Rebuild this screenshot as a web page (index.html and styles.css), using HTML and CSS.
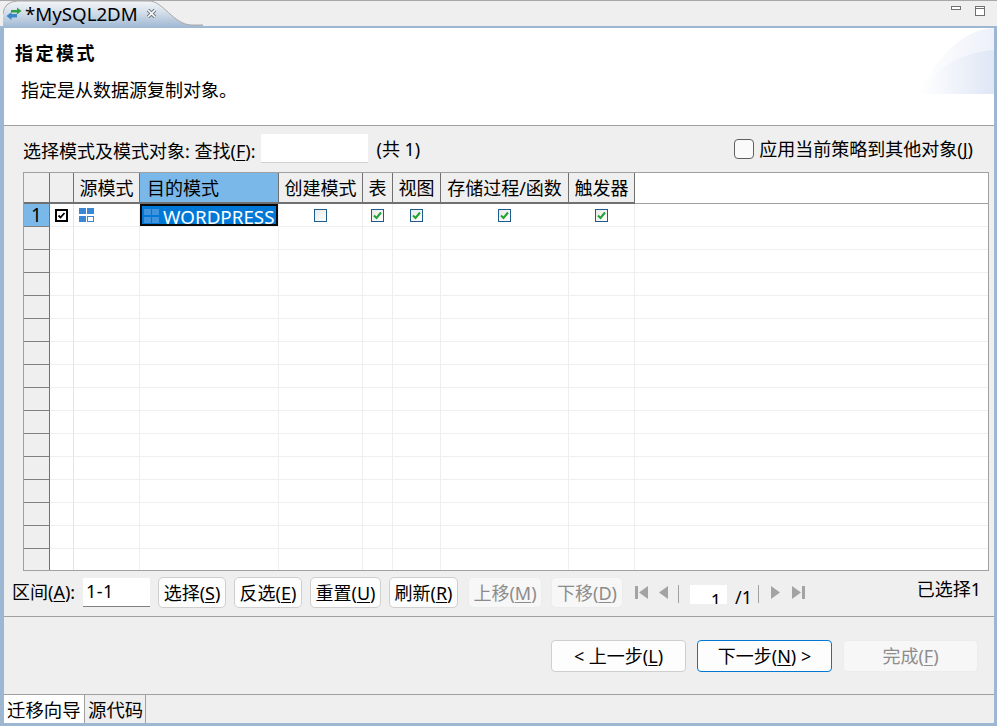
FILE: index.html
```html
<!DOCTYPE html>
<html lang="zh-CN">
<head>
<meta charset="utf-8">
<title>MySQL2DM</title>
<link rel="stylesheet" href="styles.css">
</head>
<body>
<div class="window">
  <div class="tabbar">
    <svg class="tabshape" width="200" height="28" viewBox="0 0 200 28">
      <defs><linearGradient id="tg" x1="0" y1="0" x2="0" y2="1"><stop offset="0" stop-color="#f3f5f8"/><stop offset="0.4" stop-color="#d6e0eb"/><stop offset="1" stop-color="#9db6d2"/></linearGradient></defs>
      <path d="M0 28V14Q1 2 14 1H146C160 1 170 24 188 25H200V28Z" fill="url(#tg)"/>
      <path d="M0 14Q1 2 14 1H146C160 1 170 24 188 25H200" fill="none" stroke="#a8a8a8"/>
    </svg>
    <div class="tab">
      <svg class="tabicon" width="16" height="14" viewBox="0 0 16 14">
        <path d="M5 3h6V0.500L15.500 4 11 7.500V5.500H5Z" fill="#2ea044"/>
        <path d="M11 7H5.500V5L0.500 9 5.500 13V10.500H11Z" fill="#3c86c8"/>
      </svg>
      <span class="tabtitle">*MySQL2DM</span>
      <svg class="tabclose" width="11" height="11" viewBox="0 0 11 11">
        <path d="M2 2L9 9M9 2L2 9" stroke="#6f7a85" stroke-width="3.600"/>
        <path d="M2 2L9 9M9 2L2 9" stroke="#fff" stroke-width="1.600"/>
      </svg>
    </div>
    <div class="winbtns">
      <svg width="11" height="6" viewBox="0 0 11 6"><rect x="0.500" y="0.500" width="9" height="3" fill="#fff" stroke="#707070"/></svg>
      <svg width="11" height="11" viewBox="0 0 11 11"><rect x="0.500" y="0.500" width="9" height="9" fill="#fff" stroke="#707070"/><path d="M0 2.500H10" stroke="#707070"/></svg>
    </div>
  </div>

  <div class="content">
    <header class="banner">
      <svg class="bannerart" width="76" height="66" viewBox="0 0 76 66">
        <defs>
          <linearGradient id="b1" x1="0" y1="0" x2="1" y2="0"><stop offset="0" stop-color="#fff"/><stop offset="1" stop-color="#dfe6f5"/></linearGradient>
          <linearGradient id="b2" x1="0" y1="0" x2="1" y2="0"><stop offset="0" stop-color="#fff"/><stop offset="1" stop-color="#edf1f9"/></linearGradient>
        </defs>
        <path d="M0 66C14 40 38 2 76 0V66Z" fill="url(#b2)"/>
        <path d="M2 66C14 44 40 24 76 22V66Z" fill="url(#b1)"/>
      </svg>
      <h1 class="bannertitle">指定模式</h1>
      <p class="bannerdesc">指定是从数据源复制对象。</p>
    </header>

    <div class="searchrow">
      <span>选择模式及模式对象: 查找(<u>F</u>):</span>
      <span class="searchinput"></span>
      <span class="count">(共 1)</span>
      <label class="applyall"><span class="bigcheck"></span><span>应用当前策略到其他对象(<u>J</u>)</span></label>
    </div>

    <div class="gridwrap">
      <table class="grid">
        <colgroup>
          <col class="c-num"><col class="c-chk"><col class="c-src"><col class="c-dst"><col class="c-create"><col class="c-tbl"><col class="c-view"><col class="c-proc"><col class="c-trg"><col>
        </colgroup>
        <thead>
          <tr>
            <th></th><th></th><th>源模式</th><th class="active">目的模式</th><th>创建模式</th><th>表</th><th>视图</th><th>存储过程/函数</th><th>触发器</th><th class="filler"></th>
          </tr>
        </thead>
        <tbody>
          <tr class="first">
            <td class="num selnum">1</td>
            <td class="mid"><svg class="ico" width="13" height="13" viewBox="0 0 13 13"><rect x="1" y="1" width="11" height="11" fill="#fff" stroke="#000" stroke-width="2"/><path d="M3.500 6.500L5.500 8.500L9.500 4" fill="none" stroke="#000" stroke-width="1.800"/></svg></td>
            <td class="iconcell"><svg class="ico" width="16" height="15" viewBox="0 0 16 15"><path d="M0 0H7V6H0ZM8 0H15V6H8ZM0 8H7V14H0Z" fill="#3a87d6"/><rect x="8.500" y="8.500" width="6" height="5" fill="#fff" stroke="#3a87d6"/></svg></td>
            <td class="selcell"><svg class="ico" width="16" height="15" viewBox="0 0 16 15"><path d="M0 0H7V6H0ZM8 0H15V6H8ZM0 8H7V14H0ZM8 8H15V14H8Z" fill="#3f93dd"/></svg><span>WORDPRESS</span></td>
            <td class="mid"><span class="box"></span></td>
            <td class="mid"><span class="box"><svg width="11" height="11" viewBox="0 0 11 11"><path d="M2 5.500L4.500 8L9 2.500" fill="none" stroke="#22a12e" stroke-width="2"/></svg></span></td>
            <td class="mid"><span class="box"><svg width="11" height="11" viewBox="0 0 11 11"><path d="M2 5.500L4.500 8L9 2.500" fill="none" stroke="#22a12e" stroke-width="2"/></svg></span></td>
            <td class="mid"><span class="box"><svg width="11" height="11" viewBox="0 0 11 11"><path d="M2 5.500L4.500 8L9 2.500" fill="none" stroke="#22a12e" stroke-width="2"/></svg></span></td>
            <td class="mid"><span class="box"><svg width="11" height="11" viewBox="0 0 11 11"><path d="M2 5.500L4.500 8L9 2.500" fill="none" stroke="#22a12e" stroke-width="2"/></svg></span></td>
            <td class="filler"></td>
          </tr>
          <tr><td class="num"></td><td></td><td></td><td></td><td></td><td></td><td></td><td></td><td></td><td class="filler"></td></tr>
          <tr><td class="num"></td><td></td><td></td><td></td><td></td><td></td><td></td><td></td><td></td><td class="filler"></td></tr>
          <tr><td class="num"></td><td></td><td></td><td></td><td></td><td></td><td></td><td></td><td></td><td class="filler"></td></tr>
          <tr><td class="num"></td><td></td><td></td><td></td><td></td><td></td><td></td><td></td><td></td><td class="filler"></td></tr>
          <tr><td class="num"></td><td></td><td></td><td></td><td></td><td></td><td></td><td></td><td></td><td class="filler"></td></tr>
          <tr><td class="num"></td><td></td><td></td><td></td><td></td><td></td><td></td><td></td><td></td><td class="filler"></td></tr>
          <tr><td class="num"></td><td></td><td></td><td></td><td></td><td></td><td></td><td></td><td></td><td class="filler"></td></tr>
          <tr><td class="num"></td><td></td><td></td><td></td><td></td><td></td><td></td><td></td><td></td><td class="filler"></td></tr>
          <tr><td class="num"></td><td></td><td></td><td></td><td></td><td></td><td></td><td></td><td></td><td class="filler"></td></tr>
          <tr><td class="num"></td><td></td><td></td><td></td><td></td><td></td><td></td><td></td><td></td><td class="filler"></td></tr>
          <tr><td class="num"></td><td></td><td></td><td></td><td></td><td></td><td></td><td></td><td></td><td class="filler"></td></tr>
          <tr><td class="num"></td><td></td><td></td><td></td><td></td><td></td><td></td><td></td><td></td><td class="filler"></td></tr>
          <tr><td class="num"></td><td></td><td></td><td></td><td></td><td></td><td></td><td></td><td></td><td class="filler"></td></tr>
          <tr><td class="num"></td><td></td><td></td><td></td><td></td><td></td><td></td><td></td><td></td><td class="filler"></td></tr>
          <tr><td class="num"></td><td></td><td></td><td></td><td></td><td></td><td></td><td></td><td></td><td class="filler"></td></tr>
          <tr><td class="num"></td><td></td><td></td><td></td><td></td><td></td><td></td><td></td><td></td><td class="filler"></td></tr>
        </tbody>
      </table>
    </div>

    <div class="toolbar">
      <span class="rangelabel">区间(<u>A</u>):</span>
      <span class="rangeinput">1-1</span>
      <button class="btn b-sel">选择(<u>S</u>)</button>
      <button class="btn b-inv">反选(<u>E</u>)</button>
      <button class="btn b-rst">重置(<u>U</u>)</button>
      <button class="btn b-ref">刷新(<u>R</u>)</button>
      <button class="btn b-up" disabled>上移(<u>M</u>)</button>
      <button class="btn b-dn" disabled>下移(<u>D</u>)</button>
      <div class="pager">
        <svg width="13" height="13" viewBox="0 0 13 13"><path d="M0 0H3V13H0ZM13 0V13L4 6.500Z" fill="#a3a3a3"/></svg>
        <svg class="pg-prev" width="10" height="13" viewBox="0 0 10 13"><path d="M10 0V13L1 6.500Z" fill="#a3a3a3"/></svg>
        <span class="sep"></span>
        <span class="pageinput">1</span>
        <span class="pagetotal">/1</span>
        <span class="sep sep2"></span>
        <svg class="pg-next" width="10" height="13" viewBox="0 0 10 13"><path d="M0 0V13L9 6.500Z" fill="#a3a3a3"/></svg>
        <svg class="pg-last" width="13" height="13" viewBox="0 0 13 13"><path d="M0 0V13L9 6.500ZM10 0H13V13H10Z" fill="#a3a3a3"/></svg>
      </div>
      <span class="selected">已选择1</span>
    </div>

    <div class="wizardnav">
      <button class="navbtn">&lt; 上一步(<u>L</u>)</button>
      <button class="navbtn primary">下一步(<u>N</u>) &gt;</button>
      <button class="navbtn" disabled>完成(<u>F</u>)</button>
    </div>

    <div class="bottomtabs">
      <span class="btab on">迁移向导</span>
      <span class="btab">源代码</span>
    </div>
  </div>
</div>
</body>
</html>
```

FILE: styles.css
```css
* { box-sizing: border-box; }
html, body { margin: 0; padding: 0; }
body {
  width: 997px;
  height: 726px;
  overflow: hidden;
  background: #efefef;
  color: #000;
  font-family: "Noto Sans", "Noto Sans CJK SC", sans-serif;
  font-size: 18px;
  line-height: 22px;
}
u { text-underline-offset: 2px; text-decoration-thickness: 1px; }
.window { width: 997px; height: 726px; display: flex; flex-direction: column; }

/* top tab strip */
.tabbar {
  position: relative;
  height: 26px;
  flex: none;
  display: flex;
  align-items: center;
  justify-content: space-between;
  border-top: 1px solid #a8a8a8;
}
.tabshape { position: absolute; left: 3px; top: -1px; }
.tab { position: relative; display: flex; align-items: center; padding-left: 6px; height: 25px; }
.tabtitle { margin-left: 3px; font-size: 18.700px; width: 121px; }
.tabicon { display: block; }
.tabclose { display: block; }
.winbtns { display: flex; align-items: flex-start; gap: 13px; padding-right: 11px; height: 25px; padding-top: 5px; }
.winbtns svg { display: block; }

/* framed content */
.content {
  flex: 1;
  display: flex;
  flex-direction: column;
  min-height: 0;
  border: solid #9db6d2;
  border-width: 2px 3px 3px 4px;
}
.banner {
  position: relative;
  height: 98px;
  flex: none;
  background: #fff;
  border-bottom: 1px solid #a0a0a0;
  padding: 14px 0 0 11px;
}
.bannerart { position: absolute; right: 0; top: 0; }
.bannertitle { margin: 0; font-size: 18px; font-weight: 700; line-height: 22px; letter-spacing: 2.500px; }
.bannerdesc { margin: 15px 0 0 6px; font-size: 18px; line-height: 22px; }

.searchrow {
  height: 46px;
  flex: none;
  display: flex;
  align-items: flex-start;
  padding: 8px 21px 0 19px;
}
.searchrow > span:first-child { margin-top: 6px; }
.searchinput { width: 107px; height: 29px; margin-left: 6px; background: #fff; border-bottom: 1px solid #d0d0d0; }
.count { margin: 4px 0 0 8px; }
.applyall { display: flex; align-items: center; gap: 5px; margin: 4px 0 0 auto; }
.bigcheck { width: 20px; height: 20px; border: 1px solid #606060; border-radius: 4px; background: #fafafa; }

/* grid */
.gridwrap {
  height: 399px;
  flex: none;
  margin: 0 5px 0 19px;
  border: 1px solid #a0a0a0;
  background: #fff;
  overflow: hidden;
}
.grid { width: 100%; table-layout: fixed; border-collapse: separate; border-spacing: 0; }
.c-num { width: 26px; }
.c-chk { width: 24px; }
.c-src { width: 66px; }
.c-dst { width: 139px; }
.c-create { width: 84px; }
.c-tbl { width: 30px; }
.c-view { width: 48px; }
.c-proc { width: 128px; }
.c-trg { width: 66px; }
.grid th {
  height: 31px;
  padding: 1px 0 0;
  font-weight: 400;
  text-align: center;
  white-space: nowrap;
  background: #efefef;
  border-right: 1px solid #707070;
  border-bottom: 2px solid #707070;
}
.grid th.active { background: #7ab8ea; text-align: left; padding-left: 7px; }
.grid th.filler { background: #fff; border: 0; border-bottom: 1px solid #a0a0a0; }
.grid td {
  height: 23px;
  padding: 0;
  border-right: 1px solid #efefef;
  border-bottom: 1px solid #efefef;
}
.grid td.filler { border-right: 0; }
.grid td.num {
  background: #efefef;
  text-align: center;
  border-right: 1px solid #707070;
  border-bottom: 1px solid #808080;
  font-size: 19px;
  line-height: 20px;
}
.grid td.selnum { background: #7ab8ea; }
.grid td:nth-child(2) { border-right-color: #e4e4e4; }
.mid { text-align: center; line-height: 0; }
.ico { display: inline-block; vertical-align: middle; }
.iconcell { padding-left: 5px !important; line-height: 0; }
.grid td.selcell {
  background: #0078d7;
  box-shadow: inset 0 0 0 2px #0a0a0a;
  color: #fff;
  padding-left: 4px;
  white-space: nowrap;
  line-height: 18px;
}
.selcell span { margin-left: 3px; vertical-align: middle; font-size: 18.800px; position: relative; top: 1px; }
.box {
  display: inline-block;
  width: 13px;
  height: 13px;
  border: 1px solid #1d5c8c;
  background: linear-gradient(135deg, #e8e8e8, #fff);
  vertical-align: middle;
}
.box svg { display: block; margin: 0; }

/* toolbar under the grid */
.toolbar {
  position: relative;
  height: 46px;
  flex: none;
  display: flex;
  align-items: flex-start;
  padding: 6px 0 0 8px;
  border-bottom: 1px solid #a0a0a0;
}
.rangelabel { margin-top: 4px; width: 63px; white-space: nowrap; }
.rangeinput {
  width: 67px;
  height: 29px;
  margin: 1px 0 0 8px;
  padding: 2px 0 0 3px;
  background: #fff;
  border-bottom: 1px solid #808080;
  font-size: 18px;
  letter-spacing: 0.500px;
}
.btn {
  height: 31px;
  padding: 0;
  font: inherit;
  color: #000;
  background: #fdfdfd;
  border: 1px solid #cfcfcf;
  border-radius: 5px;
  white-space: nowrap;
}
.btn:disabled { color: #8c8c8c; background: #f7f7f7; border-color: #ececec; }
.b-sel { width: 68px; margin-left: 8px; }
.b-inv { width: 68px; margin-left: 8px; }
.b-rst { width: 71px; margin-left: 8px; }
.b-ref { width: 69px; margin-left: 8px; }
.b-up { width: 74px; margin-left: 10px; }
.b-dn { width: 72px; margin-left: 9px; }
.pager { display: flex; align-items: flex-start; margin-left: 12px; padding-top: 9px; height: 34px; }
.pager svg { display: block; }
.pg-prev { margin-left: 10px; }
.sep { width: 1px; height: 18px; margin: -1px 0 0 10px; background: #a0a0a0; }
.pageinput {
  width: 37px;
  height: 19px;
  margin: -1px 0 0 11px;
  background: #fff;
  text-align: right;
  padding-right: 6px;
  line-height: 30px;
  overflow: hidden;
}
.pagetotal { width: 32px; margin: 0 0 0 8px; line-height: 22px; height: 19px; overflow: hidden; }
.sep2 { margin-left: -9px; }
.pg-next { margin-left: 12px; }
.pg-last { margin-left: 11px; }
.selected { position: absolute; right: 13px; top: 7px; }

/* wizard buttons */
.wizardnav {
  height: 78px;
  flex: none;
  display: flex;
  gap: 11px;
  justify-content: flex-end;
  padding: 23px 16px 0 0;
  border-bottom: 1px solid #a0a0a0;
}
.navbtn {
  width: 135px;
  height: 32px;
  padding: 0;
  font: inherit;
  color: #000;
  background: #fdfdfd;
  border: 1px solid #cfcfcf;
  border-radius: 4px;
}
.navbtn.primary { border-color: #0078d4; }
.navbtn:disabled { color: #8c8c8c; background: #f7f7f7; border-color: #ececec; }

/* bottom tabs */
.bottomtabs { flex: 1; display: flex; align-items: stretch; }
.btab { display: block; padding: 4px 0 0 3px; line-height: 22px; font-size: 18.400px; white-space: nowrap; }
.btab.on { width: 80px; background: #fff; }
.btab:not(.on) { width: 62px; border-right: 1px solid #a0a0a0; border-left: 1px solid #a0a0a0; }
```
